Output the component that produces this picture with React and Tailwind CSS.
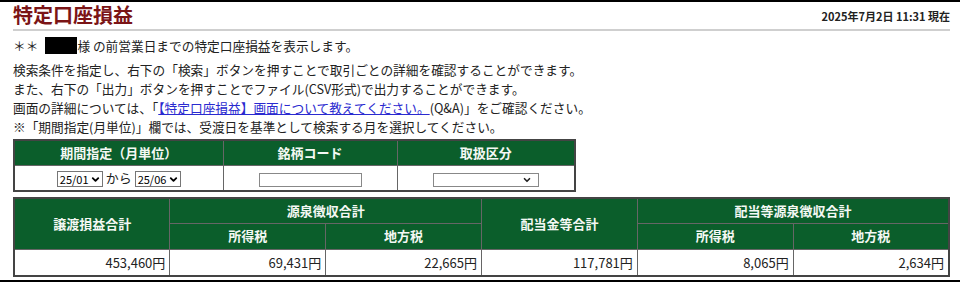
import { ChevronDown } from "lucide-react"

const font = { fontFamily: '"Noto Sans CJK JP", "Noto Sans", sans-serif' }

function MiniSelect({ value, width }) {
  return (
    <span
      className={`inline-flex h-[16px] items-center justify-between border border-[#767676] bg-white pl-[2px] pr-[1px] text-[11px] leading-none text-black align-middle ${width}`}
    >
      <span>{value}</span>
      <ChevronDown size={11} strokeWidth={4} />
    </span>
  )
}

export default function App() {
  const th = "border border-[#666] bg-[#0b5e2b] text-[#f4f8f4] font-bold text-[13px] text-center"
  const td = "border border-[#666] text-[13px] text-right pr-[4px] h-[27px]"

  return (
    <div className="w-[960px] h-[282px] bg-white text-[#222] border-t-2 border-b-2 border-black" style={font}>
      <div className="pl-[13px] pr-[10px]">
        <div className="flex items-end justify-between h-[29px] border-b-2 border-[#cfcfcf] pb-[1px]">
          <h1 className="text-[20px] font-bold text-[#7b1416] leading-[26px]">特定口座損益</h1>
          <span className="text-[11px] font-bold text-[#222] mb-[4px]">2025年7月2日 11:31 現在</span>
        </div>

        <div className="text-[12.7px] leading-[19px] mt-[5px]">
          <p className="flex items-center">
            ＊＊ <span className="inline-block w-[32px] h-[17px] bg-black ml-[7px]" />様 の前営業日までの特定口座損益を表示します。
          </p>
          <p className="mt-[5px]">検索条件を指定し、右下の「検索」ボタンを押すことで取引ごとの詳細を確認することができます。</p>
          <p>また、右下の「出力」ボタンを押すことでファイル(CSV形式)で出力することができます。</p>
          <p>
            画面の詳細については、「
            <a className="text-[#2a2ad0] underline">【特定口座損益】画面について教えてください。</a>
            (Q&amp;A)」をご確認ください。
          </p>
          <p>※「期間指定(月単位)」欄では、受渡日を基準として検索する月を選択してください。</p>
        </div>

        <table className="mt-[3px] border-collapse border-2 border-[#444] w-[563px]">
          <tbody>
            <tr className="h-[25px]">
              <th className={`${th} w-[209px]`}>期間指定（月単位）</th>
              <th className={`${th} w-[174px]`}>銘柄コード</th>
              <th className={th}>取扱区分</th>
            </tr>
            <tr className="h-[26px]">
              <td className="border border-[#666] text-center text-[13px]">
                <MiniSelect value="25/01" width="w-[46px]" /> から <MiniSelect value="25/06" width="w-[46px]" />
              </td>
              <td className="border border-[#666] text-center">
                <span className="inline-block w-[103px] h-[14px] border border-[#888] align-middle" />
              </td>
              <td className="border border-[#666] text-center">
                <span className="inline-flex w-[106px] h-[14px] border border-[#888] items-center justify-end pr-[6px] align-middle">
                  <ChevronDown size={10} strokeWidth={4} />
                </span>
              </td>
            </tr>
          </tbody>
        </table>

        <table className="mt-[5px] border-collapse border-2 border-[#444] w-[937px] table-fixed">
          <tbody>
            <tr className="h-[25px]">
              <th rowSpan={2} className={th}>譲渡損益合計</th>
              <th colSpan={2} className={th}>源泉徴収合計</th>
              <th rowSpan={2} className={th}>配当金等合計</th>
              <th colSpan={2} className={th}>配当等源泉徴収合計</th>
            </tr>
            <tr className="h-[26px]">
              <th className={th}>所得税</th>
              <th className={th}>地方税</th>
              <th className={th}>所得税</th>
              <th className={th}>地方税</th>
            </tr>
            <tr>
              <td className={td}>453,460円</td>
              <td className={td}>69,431円</td>
              <td className={td}>22,665円</td>
              <td className={td}>117,781円</td>
              <td className={td}>8,065円</td>
              <td className={td}>2,634円</td>
            </tr>
          </tbody>
        </table>
      </div>
    </div>
  )
}
